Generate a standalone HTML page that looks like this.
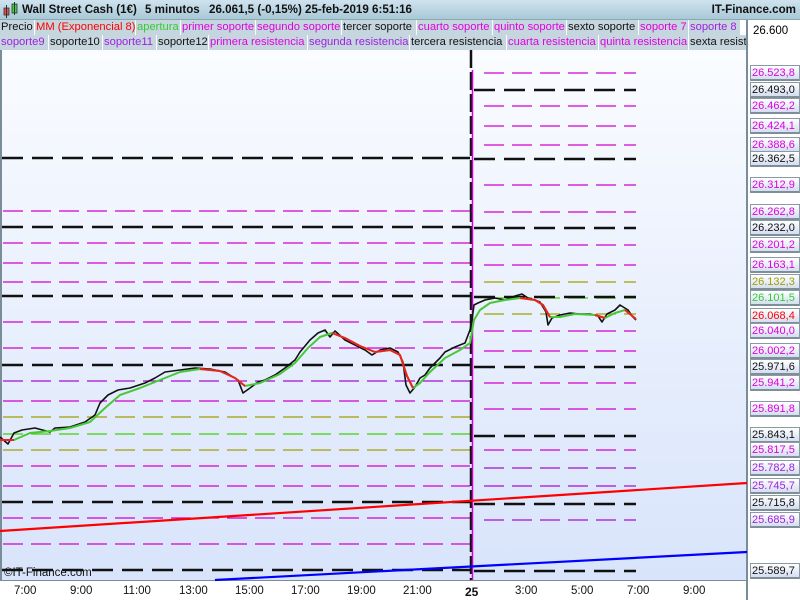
<!DOCTYPE html>
<html><head><meta charset="utf-8"><style>
*{margin:0;padding:0;box-sizing:border-box}
body{width:800px;height:600px;overflow:hidden;background:#fff;font-family:"Liberation Sans",sans-serif;position:relative}
#hdr{position:absolute;left:0;top:0;width:800px;height:20px;background:linear-gradient(#cfe3ee,#a9c8d8);border-bottom:1px solid #8aa;font-weight:bold;font-size:11.6px;line-height:20px;color:#111}
#hdr span{position:absolute;top:0}
.row{position:absolute;left:0;height:15px;font-size:11.2px;line-height:14px;white-space:nowrap}
.row span{position:absolute;top:0;height:15px;background:#c6d6de;border-right:1px solid #fff;padding-left:1px;overflow:hidden}
.m{color:#e000e0}.p{color:#a020e0}.k{color:#111}.r{color:#f00}.g{color:#3c3}
.lab{position:absolute;left:750px;width:50px;height:16px;font-size:11px;line-height:14px;padding-left:1px;background:linear-gradient(#fff,#d4def0);border:1px solid #8a9aa4;border-bottom:2px solid #7f8f9a;white-space:nowrap;overflow:hidden}
.t{position:absolute;top:585px;font-size:11.5px;color:#111}
</style></head><body>
<div id="hdr">
<svg style="position:absolute;left:3px;top:2px" width="16" height="16"><rect x="1" y="6" width="5" height="7" fill="#e05050" stroke="#333" stroke-width=".8"/><line x1="3.5" y1="3" x2="3.5" y2="16" stroke="#333"/><rect x="9" y="2" width="5" height="9" fill="#40d040" stroke="#333" stroke-width=".8"/><line x1="11.5" y1="0" x2="11.5" y2="13" stroke="#333"/></svg>
<span style="left:22px">Wall Street Cash (1€)</span>
<span style="left:145px">5 minutos</span>
<span style="left:209px">26.061,5 (-0,15%)</span>
<span style="left:305px">25-feb-2019 6:51:16</span>
<span style="right:4px">IT-Finance.com</span>
</div>
<div class="row" style="top:20px;width:741px">
<span class="k" style="left:0;width:35px">Precio</span>
<span class="r" style="left:35px;width:101px">MM (Exponencial 8)</span>
<span class="g" style="left:136px;width:45px">apertura</span>
<span class="m" style="left:181px;width:75px">primer soporte</span>
<span class="m" style="left:256px;width:86px">segundo soporte</span>
<span class="k" style="left:342px;width:75px">tercer soporte</span>
<span class="m" style="left:417px;width:76px">cuarto soporte</span>
<span class="m" style="left:493px;width:74px">quinto soporte</span>
<span class="k" style="left:567px;width:72px">sexto soporte</span>
<span class="m" style="left:639px;width:50px">soporte 7</span>
<span class="p" style="left:689px;width:52px">soporte 8</span>
</div>
<div class="row" style="top:35px;width:747px">
<span class="p" style="left:0;width:49px">soporte9</span>
<span class="k" style="left:49px;width:54px">soporte10</span>
<span class="p" style="left:103px;width:54px">soporte11</span>
<span class="k" style="left:157px;width:52px">soporte12</span>
<span class="m" style="left:209px;width:99px">primera resistencia</span>
<span class="p" style="left:308px;width:102px">segunda resistencia</span>
<span class="k" style="left:410px;width:97px">tercera resistencia</span>
<span class="m" style="left:507px;width:92px">cuarta resistencia</span>
<span class="m" style="left:599px;width:90px">quinta resistencia</span>
<span class="k" style="left:689px;width:58px">sexta resistencia</span>
</div>
<div style="position:absolute;left:0;top:50px;width:747px;height:530px;background:linear-gradient(#fafcff,#d8e4fb)"></div>
<div style="position:absolute;left:0;top:50px;width:2px;height:530px;background:#7a8c98"></div>
<div style="position:absolute;left:746px;top:20px;width:2px;height:580px;background:#7a8c98"></div>
<div style="position:absolute;left:0;top:580px;width:747px;height:1px;background:#7a8c98"></div>
<svg style="position:absolute;left:0;top:0" width="800" height="600">
<g stroke-dasharray="20 8" stroke-width="1.3" stroke="#d000d0" fill="none">
<line x1="3" y1="211" x2="470" y2="211"/><line x1="3" y1="243" x2="470" y2="243"/><line x1="3" y1="263" x2="470" y2="263"/><line x1="3" y1="282" x2="470" y2="282"/><line x1="3" y1="322" x2="470" y2="322"/><line x1="3" y1="348" x2="470" y2="348"/><line x1="3" y1="381" x2="470" y2="381" stroke="#a010d0"/><line x1="3" y1="401" x2="470" y2="401"/><line x1="3" y1="466" x2="470" y2="466"/><line x1="3" y1="486" x2="470" y2="486"/><line x1="3" y1="518" x2="470" y2="518"/><line x1="3" y1="544" x2="470" y2="544"/>
<line x1="3" y1="417" x2="470" y2="417" stroke="#a0a000"/><line x1="3" y1="434" x2="470" y2="434" stroke="#40d000"/><line x1="3" y1="450" x2="470" y2="450" stroke="#a0a000"/>
<line x1="484" y1="73" x2="636" y2="73"/><line x1="484" y1="106" x2="636" y2="106"/><line x1="484" y1="126" x2="636" y2="126"/><line x1="484" y1="145" x2="636" y2="145"/><line x1="484" y1="185" x2="636" y2="185"/><line x1="484" y1="212" x2="636" y2="212"/><line x1="484" y1="245" x2="636" y2="245"/><line x1="484" y1="265" x2="636" y2="265"/><line x1="484" y1="331" x2="636" y2="331"/><line x1="484" y1="351" x2="636" y2="351"/><line x1="484" y1="383" x2="636" y2="383"/><line x1="484" y1="409" x2="636" y2="409"/><line x1="484" y1="450" x2="636" y2="450"/><line x1="484" y1="468" x2="636" y2="468" stroke="#a010d0"/><line x1="484" y1="486" x2="636" y2="486" stroke="#a010d0"/><line x1="484" y1="520" x2="636" y2="520" stroke="#a010d0"/>
<line x1="484" y1="282" x2="636" y2="282" stroke="#a0a000"/><line x1="484" y1="298" x2="636" y2="298" stroke="#40d000"/><line x1="484" y1="314" x2="636" y2="314" stroke="#a0a000"/>
</g>
<g stroke-dasharray="21 9" stroke-width="2.5" stroke="#111" fill="none">
<line x1="2" y1="158" x2="470" y2="158"/><line x1="2" y1="227" x2="470" y2="227"/><line x1="2" y1="296" x2="470" y2="296"/><line x1="2" y1="365" x2="470" y2="365"/><line x1="2" y1="502" x2="470" y2="502"/><line x1="2" y1="570" x2="470" y2="570"/>
<line x1="474" y1="90" x2="636" y2="90"/><line x1="474" y1="159" x2="636" y2="159"/><line x1="474" y1="228" x2="636" y2="228"/><line x1="474" y1="297" x2="636" y2="297"/><line x1="474" y1="367" x2="636" y2="367"/><line x1="474" y1="436" x2="636" y2="436"/><line x1="474" y1="504" x2="636" y2="504"/><line x1="474" y1="571" x2="636" y2="571"/>
<line x1="471" y1="50" x2="471" y2="580" stroke-dasharray="18 4"/>
</g>
<line x1="472.5" y1="70" x2="472.5" y2="580" stroke="#d000d0" stroke-width="1.5"/>
<line x1="0" y1="531" x2="747" y2="483" stroke="#f00" stroke-width="2.2"/>
<line x1="215" y1="580" x2="747" y2="552" stroke="#00f" stroke-width="2.2"/>
<g fill="none" stroke-linejoin="round">
<polyline stroke="#111" stroke-width="1.6" points="0,437 8,444 14,433 22,430 35,428 50,432 55,428 70,427 85,422 95,415 100,403 108,395 118,390 130,388 145,383 155,378 165,372 180,370 195,368 210,369 225,372 238,380 243,393 250,388 258,382 265,380 275,375 285,368 295,360 300,352 310,340 318,333 325,330 330,337 335,331 345,340 355,345 365,350 372,355 380,350 390,348 398,352 403,362 406,385 410,393 415,387 420,378 425,375 430,368 440,358 445,352 455,347 465,343 470,330 472,320 474,305 478,303 485,300 495,298 505,300 515,296 522,294 528,298 535,300 540,302 546,312 548,325 552,318 560,315 570,313 580,314 590,314 598,316 602,322 607,314 615,310 620,305 628,310 632,316 636,320"/>
<polyline stroke="#48c838" stroke-width="2" points="0,440 14,440 30,433 50,431 70,428 90,422 105,408 120,395 140,388 160,380 180,372 200,369 220,371 235,378 245,386 260,383 280,374 295,363 308,348 320,337 332,333 345,338 360,346 375,352 390,350 400,355 407,376 413,388 420,383 430,372 445,358 460,350 470,343 474,320 480,310 490,303 505,300 520,298 535,300 543,305 550,317 560,317 575,314 595,315 605,318 615,313 625,310 636,319"/>
<g stroke="#f02020" stroke-width="2"><polyline points="0,440 14,440"/><polyline points="200,369 220,371 235,378 245,386"/><polyline points="332,333 345,338 360,346 375,352 390,350 400,355 407,376 413,388"/><polyline points="520,298 535,300 543,305 550,317"/><polyline points="595,315 605,318"/><polyline points="625,310 636,319"/></g>
</g>
</svg>
<div style="position:absolute;left:4px;top:567px;font-size:11.5px;color:#111">©IT-Finance.com</div>
<div class="t" style="left:14px">7:00</div><div class="t" style="left:70px">9:00</div><div class="t" style="left:123px">11:00</div><div class="t" style="left:179px">13:00</div><div class="t" style="left:235px">15:00</div><div class="t" style="left:291px">17:00</div><div class="t" style="left:347px">19:00</div><div class="t" style="left:403px">21:00</div><div class="t" style="left:465px;font-weight:bold;font-size:12px">25</div><div class="t" style="left:515px">3:00</div><div class="t" style="left:571px">5:00</div><div class="t" style="left:627px">7:00</div><div class="t" style="left:683px">9:00</div>
<div style="position:absolute;left:753px;top:25px;font-size:11.5px">26.600</div>
<div class="lab m" style="top:65px">26.523,8</div>
<div class="lab k" style="top:82px">26.493,0</div>
<div class="lab m" style="top:98px">26.462,2</div>
<div class="lab m" style="top:118px">26.424,1</div>
<div class="lab m" style="top:137px">26.388,6</div>
<div class="lab k" style="top:151px">26.362,5</div>
<div class="lab m" style="top:177px">26.312,9</div>
<div class="lab m" style="top:204px">26.262,8</div>
<div class="lab k" style="top:220px">26.232,0</div>
<div class="lab m" style="top:237px">26.201,2</div>
<div class="lab m" style="top:257px">26.163,1</div>
<div class="lab" style="top:274px;color:#a0a000">26.132,3</div>
<div class="lab g" style="top:290px">26.101,5</div>
<div class="lab r" style="top:308px">26.068,4</div>
<div class="lab m" style="top:323px">26.040,0</div>
<div class="lab m" style="top:343px">26.002,2</div>
<div class="lab k" style="top:359px">25.971,6</div>
<div class="lab m" style="top:375px">25.941,2</div>
<div class="lab m" style="top:401px">25.891,8</div>
<div class="lab k" style="top:427px">25.843,1</div>
<div class="lab m" style="top:442px">25.817,5</div>
<div class="lab p" style="top:460px">25.782,8</div>
<div class="lab p" style="top:478px">25.745,7</div>
<div class="lab k" style="top:495px">25.715,8</div>
<div class="lab p" style="top:512px">25.685,9</div>
<div class="lab k" style="top:563px">25.589,7</div>
</body></html>
